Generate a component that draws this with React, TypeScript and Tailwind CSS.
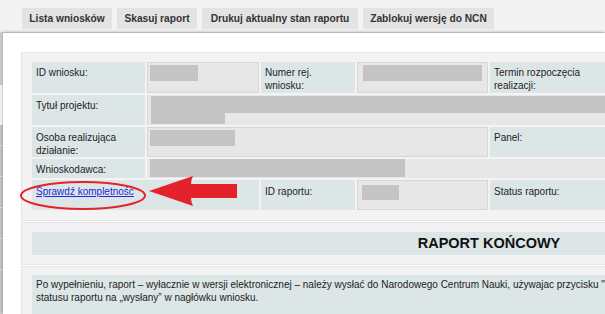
import React from "react";

const font = { fontFamily: '"Liberation Sans", Arial, sans-serif' };

function Bar({ w, h = 16 }: { w: string; h?: number }) {
  return <div className={`bg-[#c4c4c4] ${w}`} style={{ height: h }} />;
}

export default function App() {
  const label = "bg-[#dce6e6] pl-[4px] pt-[4px] text-[10px] leading-[13px] text-[#1c1c1c]";
  const value = "bg-[#e7e7e7] border border-[#d6d6d6] p-[2px]";
  return (
    <div className="relative w-[605px] h-[314px] overflow-hidden bg-white" style={font}>
      {/* top bar */}
      <div className="h-[33px] bg-[#f3f3f3] flex items-start pt-[8px] pl-[22px] gap-[5px] border-b border-[#d9d9d9]">
        <div className="w-[90px] h-[21px] bg-[#e3e3e3] flex items-center justify-center text-[10.2px] font-bold text-[#333]">Lista wniosków</div>
        <div className="w-[80px] h-[21px] bg-[#e3e3e3] flex items-center justify-center text-[10.2px] font-bold text-[#333]">Skasuj raport</div>
        <div className="w-[156px] h-[21px] bg-[#e3e3e3] flex items-center justify-center text-[10.2px] font-bold text-[#333]">Drukuj aktualny stan raportu</div>
        <div className="w-[131px] h-[21px] bg-[#e3e3e3] flex items-center justify-center text-[10.2px] font-bold text-[#333]">Zablokuj wersję do NCN</div>
      </div>
      <div className="flex h-[281px]">
        {/* left strip */}
        <div className="w-[3px] flex flex-col">
          <div className="h-[52px] bg-gradient-to-r from-[#cfcfcf] to-[#e2e2e2]" />
          <div className="h-[40px] bg-white" />
          <div className="flex-1 bg-[#cdcdcd] flex flex-col gap-[30px] pt-[20px]">
            <div className="h-px bg-[#e8e8e8]" />
            <div className="h-px bg-[#e8e8e8]" />
            <div className="h-px bg-[#e8e8e8]" />
            <div className="h-px bg-[#e8e8e8]" />
            <div className="h-px bg-[#e8e8e8]" />
          </div>
        </div>
        {/* panel */}
        <div className="flex-1 bg-white pt-[19px] pl-[18px] shadow-[-1px_-1px_3px_rgba(0,0,0,0.25)] overflow-hidden">
          <div className="w-[940px] bg-[#f3f3f3] border border-[#e6e6e6] pt-[9px] pl-[10px] pb-[10px]">
            <div className="w-[914px] grid grid-cols-[113px_112px_94px_131px_1fr] grid-rows-[31px_30px_30px_19px_30px] gap-[2px]">
              <div className={label}>ID wniosku:</div>
              <div className={value}><Bar w="w-[48px]" /></div>
              <div className={label}>Numer rej.<br />wniosku:</div>
              <div className={value + " pl-[5px]"}><Bar w="w-[119px]" /></div>
              <div className={label}>Termin rozpoczęcia<br />realizacji:</div>

              <div className={label}>Tytuł projektu:</div>
              <div className="col-span-4 bg-[#e7e7e7] border-l border-[#d6d6d6] pt-[1px] pl-[3px]">
                <div className="h-[17px] bg-[#c4c4c4]" />
                <div className="h-[11px] w-[74px] bg-[#c4c4c4]" />
              </div>

              <div className={label}>Osoba realizująca<br />działanie:</div>
              <div className={value + " col-span-3"}><Bar w="w-[85px]" /></div>
              <div className={label}>Panel:</div>

              <div className={label + " pt-[3px]"}>Wnioskodawca:</div>
              <div className="col-span-4 bg-[#e7e7e7] pl-[3px]"><div className="h-[18px] w-[255px] bg-[#c4c4c4]" /></div>

              <div className={label + " col-span-2 pt-[5px]"}>
                <span className="text-[#2626d9] underline">Sprawdź kompletność</span>
              </div>
              <div className={label + " pt-[5px]"}>ID raportu:</div>
              <div className={value + " pt-[4px] pl-[4px]"}><Bar w="w-[37px]" h={15} /></div>
              <div className={label + " pt-[5px]"}>Status raportu:</div>
            </div>
          </div>
          <div className="w-[940px] mt-[1px] bg-[#f3f3f3] border border-[#e6e6e6] py-[9px] pl-[10px]">
            <div className="w-[914px] h-[23px] bg-[#dce6e6] flex items-center justify-center text-[14.5px] font-bold text-[#111]">
              RAPORT KOŃCOWY
            </div>
          </div>
          <div className="w-[940px] mt-[1px] bg-[#f3f3f3] border border-[#e6e6e6] pt-[8px] pl-[10px] h-[60px]">
            <div className="w-[914px] h-[60px] bg-[#dce6e6] pl-[4px] pt-[3px] text-[10px] leading-[13px] text-[#1c1c1c]">
              Po wypełnieniu, raport – wyłacznie w wersji elektronicznej – należy wysłać do Narodowego Centrum Nauki, używajac przycisku "Wyślij", co spowoduje zmianę<br />
              statusu raportu na „wysłany” w nagłówku wniosku.
            </div>
          </div>
        </div>
      </div>
      {/* annotations */}
      <svg className="absolute left-0 top-0 pointer-events-none" width="605" height="314" viewBox="0 0 605 314">
        <ellipse cx="83" cy="195.5" rx="62" ry="13.5" fill="none" stroke="#e3222b" strokeWidth="2" />
        <path d="M149 191 L193 176 Q191 180 191 184 L237 184 L237 198 L191 198 Q191 202 193 206 Z" fill="#e3222b" />
      </svg>
    </div>
  );
}
